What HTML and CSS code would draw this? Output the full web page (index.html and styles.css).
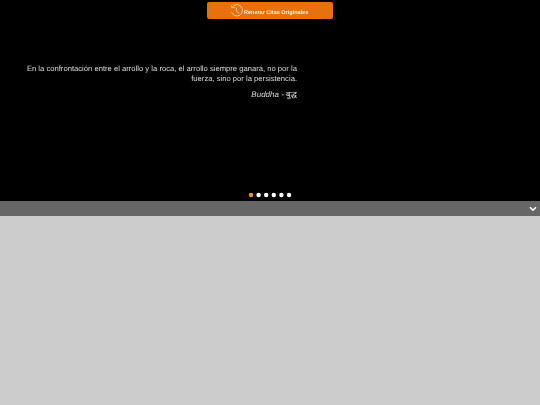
FILE: index.html
```html
<!DOCTYPE html>
<html lang="es">
<head>
<meta charset="utf-8">
<title>Citas</title>
<link rel="stylesheet" href="styles.css">
</head>
<body>
<section class="hero">
  <div class="top">
    <button class="btn">
      <svg class="ico" viewBox="0 0 14 14" width="14" height="14"><path d="M2.2 3.2A5.6 5.6 0 1 1 1.6 8.2" fill="none" stroke="#f3d9c0" stroke-width=".8"/><path d="M1 1.2 2 4l2.8-.7" fill="none" stroke="#f3d9c0" stroke-width=".8"/><path d="M6.4 3.6V7l2.8 2.6" fill="none" stroke="#f3d9c0" stroke-width=".8"/></svg>
      <span class="label">Renerar Citas Originales</span>
    </button>
  </div>
  <blockquote class="quote">
    <p class="text">En la confrontación entre el arrollo y la roca, el arrollo siempre ganará, no por la fuerza, sino por la persistencia.</p>
    <p class="author">Buddha - बुद्ध</p>
  </blockquote>
  <svg class="dots" viewBox="0 0 44 6" width="44" height="6">
    <circle class="on" cx="3" cy="3" r="2.2"/><circle cx="10.6" cy="3" r="2.2"/><circle cx="18.2" cy="3" r="2.2"/><circle cx="25.8" cy="3" r="2.2"/><circle cx="33.4" cy="3" r="2.2"/><circle cx="41" cy="3" r="2.2"/>
  </svg>
</section>
<div class="bar">
  <svg class="chev" viewBox="0 0 8 6" width="8" height="6"><path d="M1 1.2 4 4.2 7 1.2" fill="none" stroke="#fff" stroke-width="1.6"/></svg>
</div>
<main class="rest"></main>
</body>
</html>
```
FILE: styles.css
```css
* { box-sizing: border-box; }
html, body { margin: 0; height: 100%; }
body { display: flex; flex-direction: column; background: #ccc; font-family: "Liberation Sans", Arial, "Noto Sans", sans-serif; overflow: hidden; }
.hero { height: 201px; background: #000; display: flex; flex-direction: column; padding-top: 2px; }
.top { display: flex; justify-content: center; }
.btn { width: 126px; height: 17px; background: #e8710f; border: 0; border-radius: 2px; padding: 0 0 0 23px; display: flex; align-items: center; gap: 0; color: #f6f0e6; font: bold 5.5px "Liberation Sans", Arial, sans-serif; text-rendering: geometricPrecision; will-change: transform; }
.ico { flex: none; }
.label { margin-top: 4px; }
.quote { margin: 45px 0 0 26px; width: 271px; color: #dcdcdc; font-size: 7.65px; line-height: 9.5px; text-align: right; text-rendering: geometricPrecision; will-change: transform; }
.text { margin: 0; text-align: right; }
.author { margin: 6.5px 0 0; font-style: italic; font-size: 8px; }
.dots { margin: auto auto 3px; display: block; fill: #fff; }
.dots .on { fill: #e8961f; }
.bar { height: 15px; background: #666; display: flex; justify-content: flex-end; align-items: center; padding-right: 3px; }
.rest { flex: 1; background: #ccc; }
```
